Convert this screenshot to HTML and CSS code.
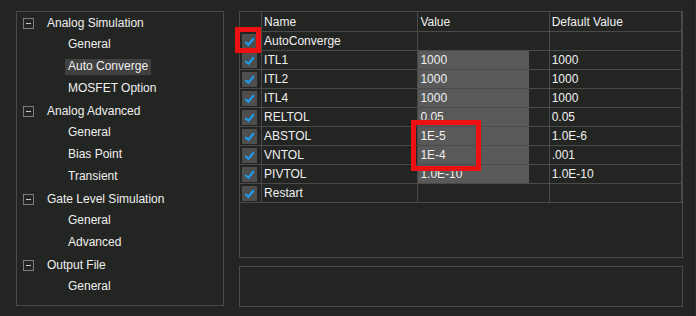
FILE: index.html
```html
<!DOCTYPE html>
<html lang="en">
<head>
    <meta charset="UTF-8">
    <title>Simulation Options</title>
    <link rel="stylesheet" href="styles.css">
</head>
<body>
    <div class="window">
        <!-- arvore de categorias -->
        <div class="tree">
            <div class="node"><span class="toggle"></span>Analog Simulation</div>
            <div class="leaf"><span>General</span></div>
            <div class="leaf"><span class="selected">Auto Converge</span></div>
            <div class="leaf"><span>MOSFET Option</span></div>
            <div class="node"><span class="toggle"></span>Analog Advanced</div>
            <div class="leaf"><span>General</span></div>
            <div class="leaf"><span>Bias Point</span></div>
            <div class="leaf"><span>Transient</span></div>
            <div class="node"><span class="toggle"></span>Gate Level Simulation</div>
            <div class="leaf"><span>General</span></div>
            <div class="leaf"><span>Advanced</span></div>
            <div class="node"><span class="toggle"></span>Output File</div>
            <div class="leaf"><span>General</span></div>
        </div>

        <div class="right">
            <div class="grid-box">
                <table class="grid">
                    <tr class="head">
                        <th class="c-check"></th>
                        <th class="c-name">Name</th>
                        <th class="c-value">Value</th>
                        <th class="c-default">Default Value</th>
                    </tr>
                    <tr>
                        <td><span class="check"><svg viewBox="0 0 14 14"><polyline points="3,7.5 6,10 11,4"/></svg></span></td>
                        <td>AutoConverge</td>
                        <td></td>
                        <td></td>
                    </tr>
                    <tr>
                        <td><span class="check"><svg viewBox="0 0 14 14"><polyline points="3,7.5 6,10 11,4"/></svg></span></td>
                        <td>ITL1</td>
                        <td><div class="val">1000</div></td>
                        <td>1000</td>
                    </tr>
                    <tr>
                        <td><span class="check"><svg viewBox="0 0 14 14"><polyline points="3,7.5 6,10 11,4"/></svg></span></td>
                        <td>ITL2</td>
                        <td><div class="val">1000</div></td>
                        <td>1000</td>
                    </tr>
                    <tr>
                        <td><span class="check"><svg viewBox="0 0 14 14"><polyline points="3,7.5 6,10 11,4"/></svg></span></td>
                        <td>ITL4</td>
                        <td><div class="val">1000</div></td>
                        <td>1000</td>
                    </tr>
                    <tr>
                        <td><span class="check"><svg viewBox="0 0 14 14"><polyline points="3,7.5 6,10 11,4"/></svg></span></td>
                        <td>RELTOL</td>
                        <td><div class="val">0.05</div></td>
                        <td>0.05</td>
                    </tr>
                    <tr>
                        <td><span class="check"><svg viewBox="0 0 14 14"><polyline points="3,7.5 6,10 11,4"/></svg></span></td>
                        <td>ABSTOL</td>
                        <td><div class="val">1E-5</div></td>
                        <td>1.0E-6</td>
                    </tr>
                    <tr>
                        <td><span class="check"><svg viewBox="0 0 14 14"><polyline points="3,7.5 6,10 11,4"/></svg></span></td>
                        <td>VNTOL</td>
                        <td><div class="val">1E-4</div></td>
                        <td>.001</td>
                    </tr>
                    <tr>
                        <td><span class="check"><svg viewBox="0 0 14 14"><polyline points="3,7.5 6,10 11,4"/></svg></span></td>
                        <td>PIVTOL</td>
                        <td><div class="val">1.0E-10</div></td>
                        <td>1.0E-10</td>
                    </tr>
                    <tr>
                        <td><span class="check"><svg viewBox="0 0 14 14"><polyline points="3,7.5 6,10 11,4"/></svg></span></td>
                        <td>Restart</td>
                        <td></td>
                        <td></td>
                    </tr>
                </table>
            </div>
            <div class="info-box"></div>
        </div>

        <!-- marcacoes vermelhas -->
        <div class="mark mark-check"></div>
        <div class="mark mark-values"></div>
    </div>
</body>
</html>
```

FILE: styles.css
```css
body {
    margin: 0;
    padding: 0;
    background-color: #232522;
    font-family: 'Liberation Sans', Arial, sans-serif;
    font-size: 12px;
    color: #f0f0f0;
}

.window {
    position: relative;
    width: 696px;
    height: 316px;
    box-sizing: border-box;
    padding: 11px 0 0 16px;
    display: flex;
    gap: 15px;
    border-right: 1px solid #2e302d;
}

/* arvore */
.tree {
    width: 208px;
    height: 295px;
    box-sizing: border-box;
    border: 1px solid #4a4a4a;
}

.node {
    display: flex;
    align-items: center;
    height: 22px;
    padding-left: 6px;
}

.toggle {
    position: relative;
    width: 11px;
    height: 11px;
    box-sizing: border-box;
    border: 1px solid #7c7c7c;
    margin-right: 13px;
}

.toggle:after {
    content: '';
    position: absolute;
    left: 2px;
    top: 4px;
    width: 5px;
    height: 1px;
    background-color: #c8c8c8;
}

.leaf {
    display: flex;
    align-items: center;
    height: 22px;
    padding-left: 48px;
}

.leaf span {
    padding: 1px 3px 2px 3px;
    line-height: 13px;
}

.leaf .selected {
    background-color: #404040;
}

/* lado direito */
.right {
    width: 444px;
    display: flex;
    flex-direction: column;
    gap: 8px;
}

.grid-box {
    height: 247px;
    box-sizing: border-box;
    border: 1px solid #4a4a4a;
}

.grid {
    border-collapse: collapse;
    table-layout: fixed;
    width: 442px;
}

.grid th,
.grid td {
    height: 18px;
    padding: 0 0 0 2px;
    border-right: 1px solid #4a4a4a;
    border-bottom: 1px solid #4a4a4a;
    text-align: left;
    font-weight: normal;
    white-space: nowrap;
    vertical-align: middle;
}

.grid .head th {
    height: 19px;
}

.c-check { width: 19px; }
.c-name { width: 153px; }
.c-value { width: 128px; }
.c-default { width: 129px; }

.grid td:first-child {
    padding: 0 0 0 2px;
}

.grid td:nth-child(3) {
    padding: 0;
}

.check {
    display: block;
    width: 15px;
    height: 15px;
    background-color: #4e4e4e;
}

.check svg {
    display: block;
    width: 15px;
    height: 15px;
}

.check polyline {
    fill: none;
    stroke: #1e9cf0;
    stroke-width: 2;
}

.val {
    width: 109px;
    height: 18px;
    line-height: 18px;
    padding-left: 2px;
    background-color: #595959;
}

.info-box {
    height: 41px;
    box-sizing: border-box;
    border: 1px solid #4a4a4a;
}

/* anotacoes */
.mark {
    position: absolute;
    box-sizing: border-box;
    border: 5px solid #ee1111;
}

.mark-check {
    left: 235px;
    top: 27px;
    width: 26px;
    height: 26px;
}

.mark-values {
    left: 411px;
    top: 120px;
    width: 70px;
    height: 51px;
}
```
